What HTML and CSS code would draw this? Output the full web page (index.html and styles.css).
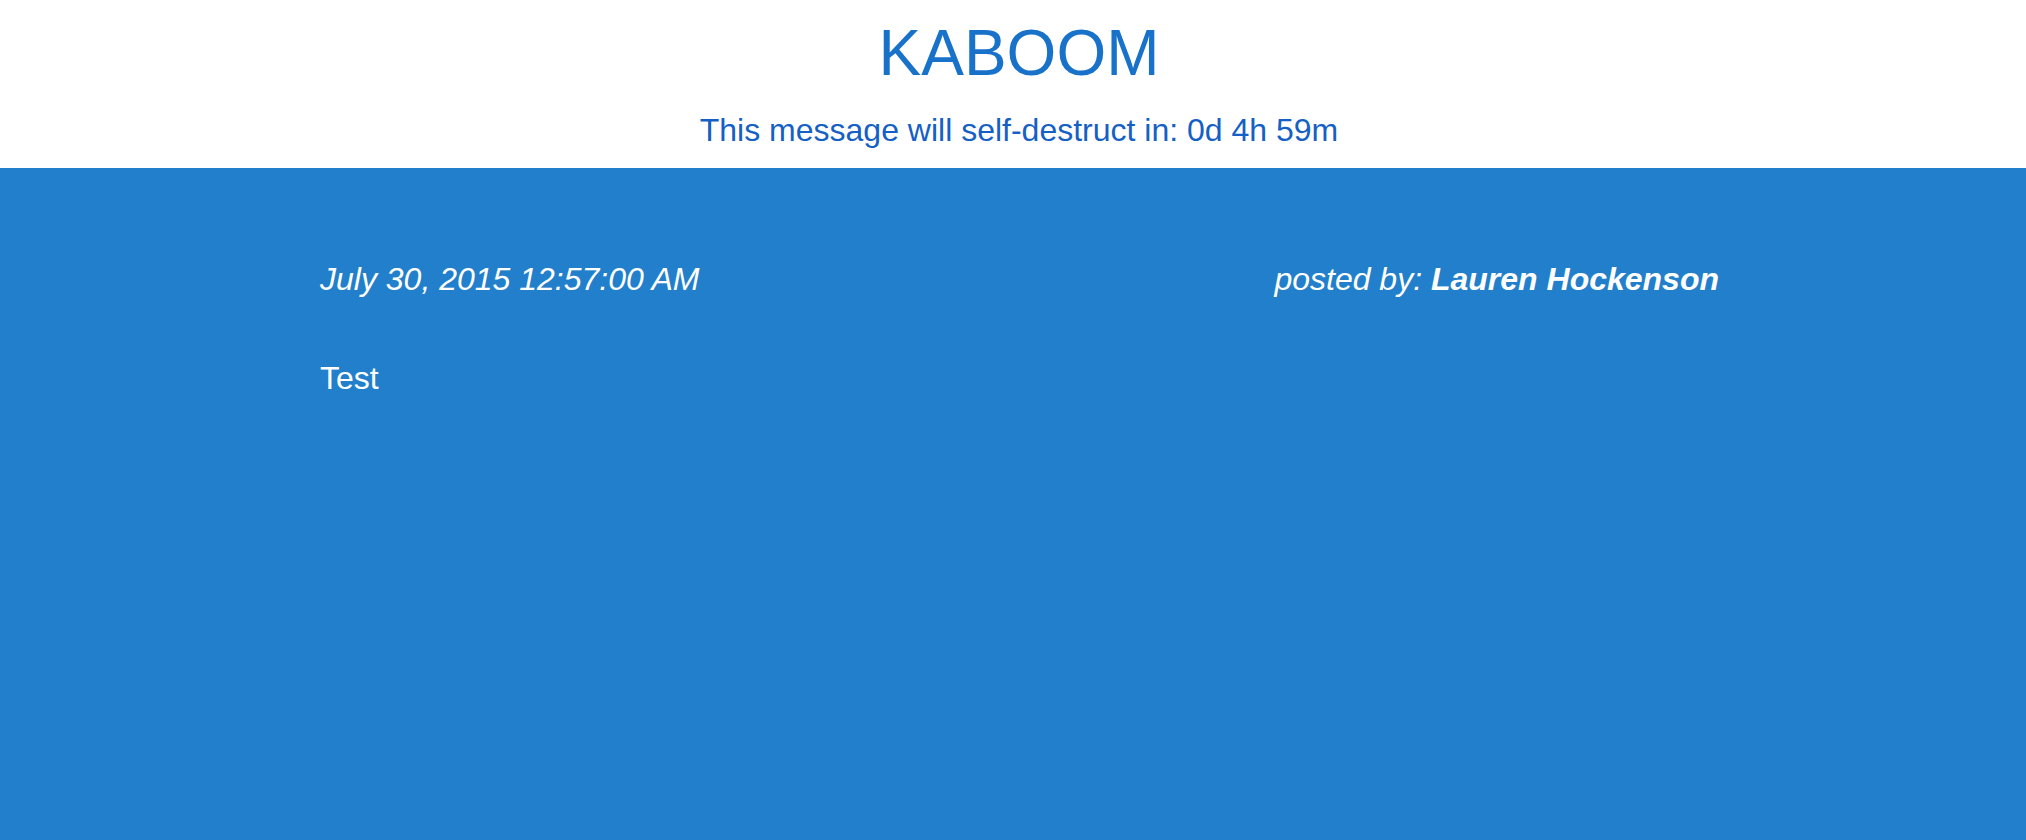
FILE: index.html
```html
<!DOCTYPE html>
<html lang="en">
<head>
<meta charset="utf-8">
<title>KABOOM</title>
<link rel="stylesheet" href="styles.css">
</head>
<body>
<header class="masthead">
  <h1 class="brand">KABOOM</h1>
  <p class="countdown">This message will self-destruct in: 0d 4h 59m</p>
</header>
<main class="stage">
  <article class="message">
    <div class="meta">
      <span class="date">July 30, 2015 12:57:00 AM</span>
      <span class="author">posted by: <strong>Lauren Hockenson</strong></span>
    </div>
    <p class="body">Test</p>
  </article>
</main>
</body>
</html>
```
FILE: styles.css
```css
html, body {
  margin: 0;
  padding: 0;
  height: 100%;
}
body {
  font-family: "Liberation Sans", Arial, Helvetica, sans-serif;
  background: #227fcb;
  display: flex;
  flex-direction: column;
}
.masthead {
  background: #ffffff;
  text-align: center;
  padding: 21px 0 18px 12px;
}
.brand {
  margin: 0;
  font-size: 64px;
  line-height: 64px;
  font-weight: normal;
  color: #1972c9;
}
.countdown {
  margin: 25px 0 0;
  font-size: 32px;
  line-height: 40px;
  color: #1560c4;
}
.stage {
  flex: 1;
  background: #227fcb;
  padding: 91px 307px 0 320px;
  color: #ffffff;
}
.meta {
  display: flex;
  justify-content: space-between;
  font-size: 32px;
  line-height: 40px;
  font-style: italic;
}
.author strong {
  font-weight: bold;
}
.body {
  margin: 59px 0 0;
  font-size: 32px;
  line-height: 40px;
}
```
